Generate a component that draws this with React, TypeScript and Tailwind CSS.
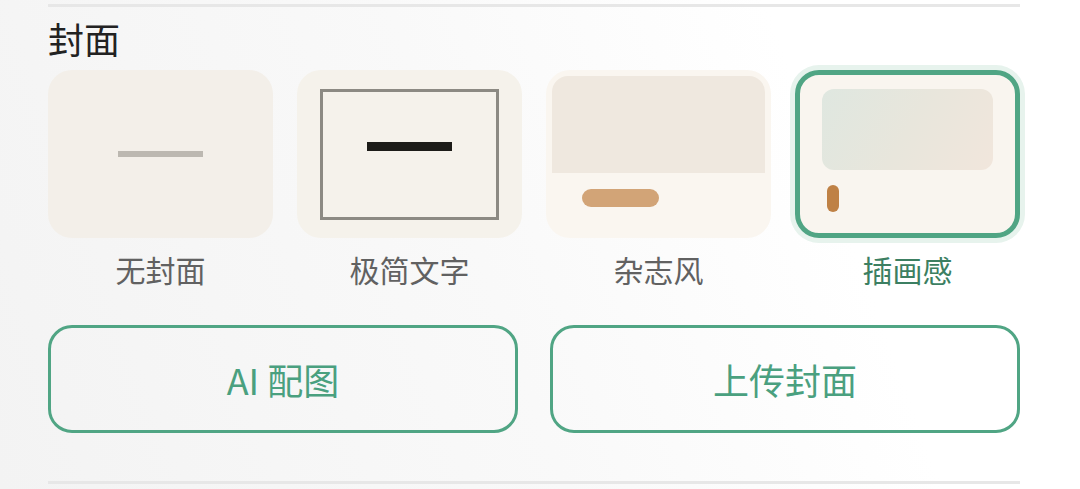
const options = [
  { key: 'none', label: '无封面' },
  { key: 'minimal', label: '极简文字' },
  { key: 'magazine', label: '杂志风' },
  { key: 'illustration', label: '插画感' },
];

const Preview = ({ kind, active }: { kind: string; active: boolean }) => {
  if (kind === 'none') {
    return (
      <div className="h-[168px] rounded-[24px] bg-[#f3efe9] flex items-center justify-center">
        <div className="w-[85px] h-[6px] bg-[#bcb8b1]" />
      </div>
    );
  }
  if (kind === 'minimal') {
    return (
      <div className="h-[168px] rounded-[24px] bg-[#f5f2eb] pl-[23px] pt-[19px]">
        <div className="w-[179px] h-[131px] border-[3px] border-[#8c8a83] flex justify-center pt-[50px]">
          <div className="w-[85px] h-[9px] bg-[#1c1c18]" />
        </div>
      </div>
    );
  }
  if (kind === 'magazine') {
    return (
      <div className="h-[168px] rounded-[24px] bg-[#faf6f0] p-[6px]">
        <div className="h-[97px] rounded-t-[16px] bg-[#efe8df]" />
        <div className="ml-[30px] mt-[16px] w-[77px] h-[18px] rounded-full bg-[#d2a477]" />
      </div>
    );
  }
  return (
    <div
      className={
        'h-[168px] rounded-[24px] bg-[#f9f5ef] border-[5px] pl-[22px] pt-[14px] ' +
        (active ? 'border-[#50a584] shadow-[0_0_0_5px_#e7f3ed]' : 'border-transparent')
      }
    >
      <div className="w-[171px] h-[81px] rounded-[12px] bg-[linear-gradient(120deg,#dfe7e0,#e8e6dc_50%,#f1e6dc)]" />
      <div className="ml-[5px] mt-[15px] w-[12px] h-[27px] rounded-full bg-[#bf8145]" />
    </div>
  );
};

export default function App() {
  const selected = 'illustration';

  return (
    <div className="w-[1080px] h-[489px] overflow-hidden bg-[linear-gradient(70deg,#f3f3f3,#f9f9f9_45%,#ffffff_75%)] font-['Noto_Sans_CJK_SC',sans-serif]">
      <div className="pl-12 pr-[60px] pt-1">
        <div className="h-[3px] bg-[#e7e7e7]" />

        <h2 className="mt-[9px] text-[36px] leading-[44px] text-[#222]">封面</h2>

        <div className="mt-[10px] grid grid-cols-4 gap-6">
          {options.map(o => (
            <div key={o.key} className="flex flex-col">
              <Preview kind={o.key} active={o.key === selected} />
              <div
                className={
                  'mt-[11px] text-center text-[30px] leading-[40px] ' +
                  (o.key === selected ? 'text-[#3c7f62]' : 'text-[#616161]')
                }
              >
                {o.label}
              </div>
            </div>
          ))}
        </div>

        <div className="mt-[36px] grid grid-cols-2 gap-8">
          <button className="h-[108px] rounded-[24px] border-[3px] border-[#50a584] text-[36px] text-[#4aa07f]">
            AI 配图
          </button>
          <button className="h-[108px] rounded-[24px] border-[3px] border-[#50a584] text-[36px] text-[#4aa07f]">
            上传封面
          </button>
        </div>

        <div className="mt-[48px] h-[3px] bg-[#e7e7e7]" />
      </div>
    </div>
  );
}
